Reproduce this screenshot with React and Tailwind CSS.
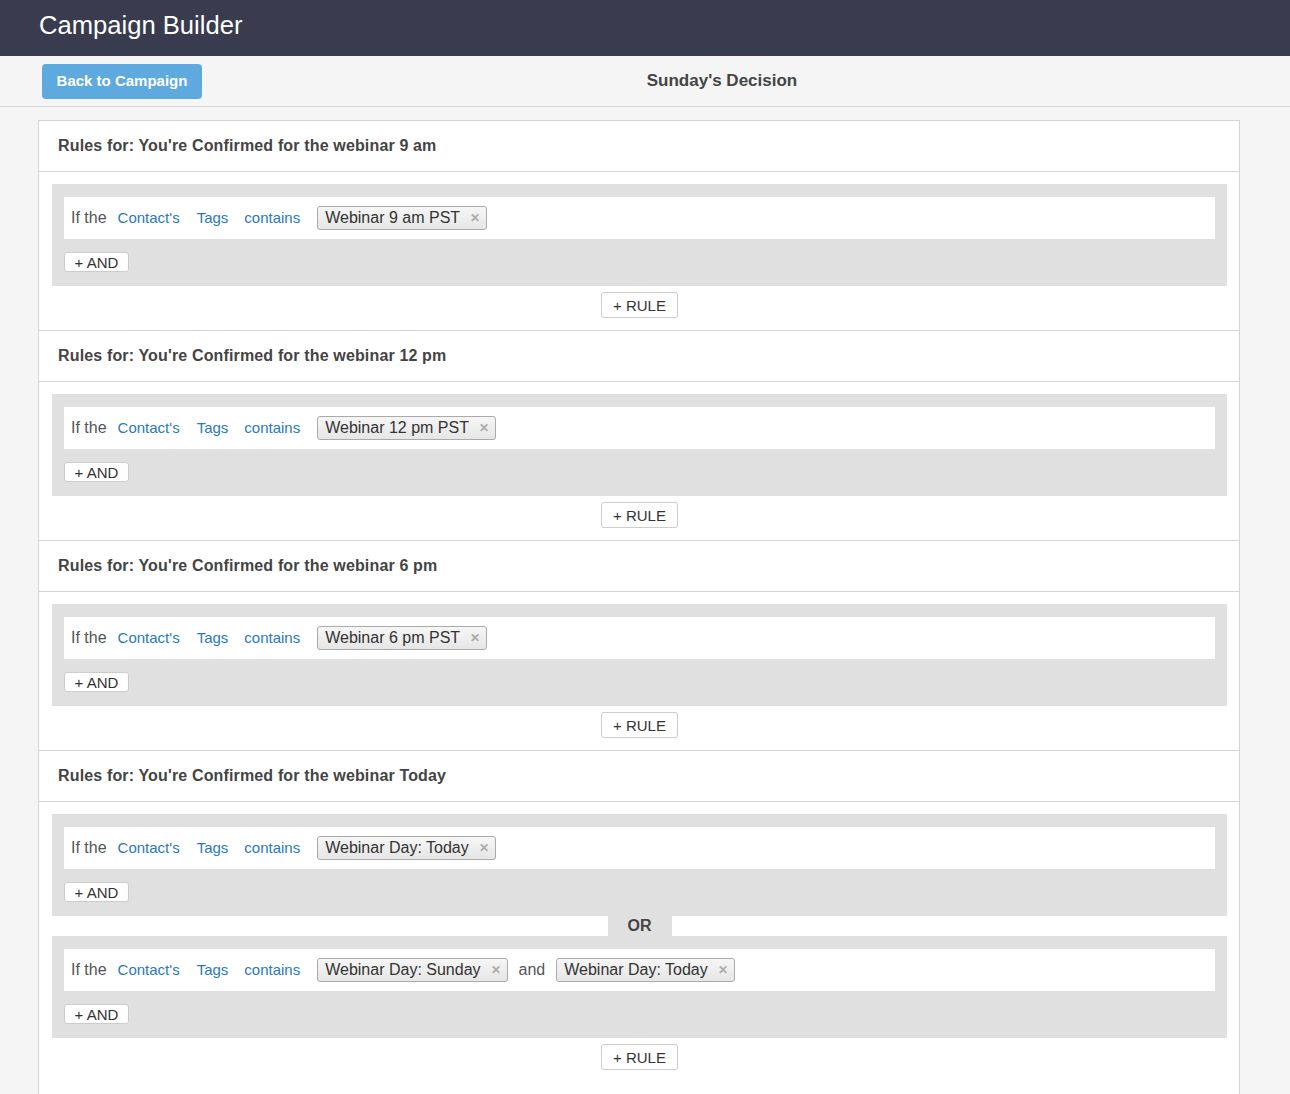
import React from "react";

const sections = [
  { title: "Rules for: You're Confirmed for the webinar 9 am", groups: [[["Webinar 9 am PST"]]] },
  { title: "Rules for: You're Confirmed for the webinar 12 pm", groups: [[["Webinar 12 pm PST"]]] },
  { title: "Rules for: You're Confirmed for the webinar 6 pm", groups: [[["Webinar 6 pm PST"]]] },
  {
    title: "Rules for: You're Confirmed for the webinar Today",
    groups: [[["Webinar Day: Today"]], [["Webinar Day: Sunday", "Webinar Day: Today"]]],
  },
];

function Chip({ label }) {
  return (
    <span className="inline-flex items-center h-[24px] pl-[7px] pr-[6px] border border-[#aaaaaa] rounded-[3px] bg-gradient-to-b from-[#f6f6f6] to-[#e6e6e6] text-[16px] text-[#333333] leading-none">
      <span>{label}</span>
      <span className="ml-[10px] text-[12px] font-bold text-[#aaaaaa]">✕</span>
    </span>
  );
}

function Condition({ tags }) {
  return (
    <div className="bg-white h-[42px] flex items-center pl-[7px]">
      <span className="text-[16px] text-[#555555]">If the</span>
      <span className="ml-[11px] text-[15px] text-[#2a7ab9]">Contact's</span>
      <span className="ml-[17px] text-[15px] text-[#2a7ab9]">Tags</span>
      <span className="ml-[16px] text-[15px] text-[#2a7ab9]">contains</span>
      <span className="ml-[17px] flex items-center">
        {tags.map((t, i) => (
          <React.Fragment key={i}>
            {i > 0 && <span className="mx-[11px] text-[16px] text-[#555555]">and</span>}
            <Chip label={t} />
          </React.Fragment>
        ))}
      </span>
    </div>
  );
}

function Group({ conditions }) {
  return (
    <div className="bg-[#e0e0e0] pt-[13px] pb-[14px] px-[12px]">
      {conditions.map((c, i) => (
        <Condition key={i} tags={c} />
      ))}
      <button className="mt-[13px] h-[20px] w-[65px] bg-white border border-[#cccccc] rounded-[3px] text-[15px] text-[#333333] leading-none flex items-center justify-center">
        + AND
      </button>
    </div>
  );
}

function Section({ s, last }) {
  return (
    <div className={last ? "pb-[30px]" : "border-b border-[#d4d4d4]"}>
      <div className="h-[50px] border-b border-[#d4d4d4] flex items-center pl-[19px] box-content">
        <h2 className="text-[16px] font-bold text-[#444444] tracking-[0.15px]">{s.title}</h2>
      </div>
      <div className="pt-[12px] pb-[12px] pl-[13px] pr-[12px]">
        {s.groups.map((g, i) => (
          <React.Fragment key={i}>
            {i > 0 && (
              <div className="flex justify-center">
                <div className="w-[64px] h-[20px] bg-[#e0e0e0] flex items-center justify-center text-[16px] font-bold text-[#444444]">
                  OR
                </div>
              </div>
            )}
            <Group conditions={g} />
          </React.Fragment>
        ))}
        <div className="flex justify-center mt-[6px]">
          <button className="h-[26px] w-[77px] bg-white border border-[#cccccc] rounded-[3px] text-[15px] text-[#333333] leading-none flex items-center justify-center">
            + RULE
          </button>
        </div>
      </div>
    </div>
  );
}

export default function App() {
  return (
    <div
      className="min-h-[1094px] bg-[#f5f5f5]"
      style={{ fontFamily: '"Liberation Sans", Arial, sans-serif' }}
    >
      <div className="h-[56px] bg-[#393b4e] flex items-center pl-[39px] pb-[6px]">
        <h1 className="text-[25.6px] text-white font-normal">Campaign Builder</h1>
      </div>
      <div className="h-[51px] border-b border-[#d4d4d4] flex items-center pl-[42px] pr-[48px]">
        <button className="h-[35px] w-[160px] bg-[#5eaade] rounded-[4px] text-white font-bold text-[15px]">
          Back to Campaign
        </button>
        <div className="flex-1 text-center text-[17px] font-bold text-[#444444]">Sunday's Decision</div>
      </div>
      <div className="ml-[38px] mt-[13px] w-[1202px] bg-white border border-[#d4d4d4]">
        {sections.map((s, i) => (
          <Section key={i} s={s} last={i === sections.length - 1} />
        ))}
      </div>
    </div>
  );
}
